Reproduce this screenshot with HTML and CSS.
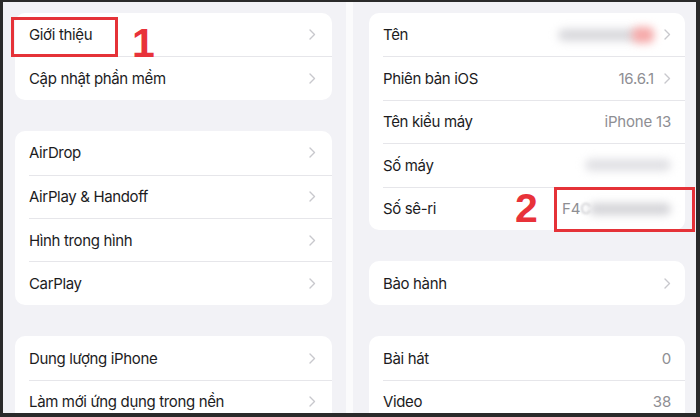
FILE: index.html
```html
<!DOCTYPE html>
<html lang="vi">
<head>
<meta charset="utf-8">
<title>Cài đặt chung</title>
<link rel="stylesheet" href="styles.css">
</head>
<body>
<div class="frame">
  <section class="panel panel-left">
    <div class="card">
      <div class="row"><span class="label">Giới thiệu</span><svg class="chev" viewBox="0 0 7 11"><path d="M1 1l4.5 4.5L1 10"/></svg></div>
      <div class="row"><span class="label">Cập nhật phần mềm</span><svg class="chev" viewBox="0 0 7 11"><path d="M1 1l4.5 4.5L1 10"/></svg></div>
    </div>
    <div class="card">
      <div class="row"><span class="label">AirDrop</span><svg class="chev" viewBox="0 0 7 11"><path d="M1 1l4.5 4.5L1 10"/></svg></div>
      <div class="row"><span class="label">AirPlay &amp; Handoff</span><svg class="chev" viewBox="0 0 7 11"><path d="M1 1l4.5 4.5L1 10"/></svg></div>
      <div class="row"><span class="label">Hình trong hình</span><svg class="chev" viewBox="0 0 7 11"><path d="M1 1l4.5 4.5L1 10"/></svg></div>
      <div class="row"><span class="label">CarPlay</span><svg class="chev" viewBox="0 0 7 11"><path d="M1 1l4.5 4.5L1 10"/></svg></div>
    </div>
    <div class="card">
      <div class="row"><span class="label">Dung lượng iPhone</span><svg class="chev" viewBox="0 0 7 11"><path d="M1 1l4.5 4.5L1 10"/></svg></div>
      <div class="row"><span class="label">Làm mới ứng dụng trong nền</span><svg class="chev" viewBox="0 0 7 11"><path d="M1 1l4.5 4.5L1 10"/></svg></div>
    </div>
  </section>
  <div class="strip"></div>
  <section class="panel panel-right">
    <div class="card">
      <div class="row"><span class="label">Tên</span><span class="value"><span class="blur blur-name"></span><span class="blur blur-red"></span></span><svg class="chev" viewBox="0 0 7 11"><path d="M1 1l4.5 4.5L1 10"/></svg></div>
      <div class="row"><span class="label">Phiên bản iOS</span><span class="value">16.6.1</span><svg class="chev" viewBox="0 0 7 11"><path d="M1 1l4.5 4.5L1 10"/></svg></div>
      <div class="row"><span class="label">Tên kiểu máy</span><span class="value">iPhone 13</span></div>
      <div class="row"><span class="label">Số máy</span><span class="value"><span class="blur blur-model"></span></span></div>
      <div class="row"><span class="label">Số sê-ri</span><span class="value">F4<span class="fade">C</span><span class="blur blur-serial"></span></span></div>
    </div>
    <div class="card">
      <div class="row"><span class="label">Bảo hành</span><svg class="chev" viewBox="0 0 7 11"><path d="M1 1l4.5 4.5L1 10"/></svg></div>
    </div>
    <div class="card">
      <div class="row"><span class="label">Bài hát</span><span class="value">0</span></div>
      <div class="row"><span class="label">Video</span><span class="value">38</span></div>
    </div>
  </section>

  <div class="mark mark-1"></div>
  <div class="num num-1">1</div>
  <div class="mark mark-2"></div>
  <div class="num num-2">2</div>
</div>
</body>
</html>
```
FILE: styles.css
```css
* { box-sizing: border-box; }
html, body { margin: 0; padding: 0; }
body {
  width: 700px;
  height: 417px;
  overflow: hidden;
  background: #2b2b2b;
  font-family: Inter, "Noto Sans", sans-serif;
}
.frame {
  position: relative;
  width: 700px;
  height: 417px;
  border-style: solid;
  border-color: #2a2a2a;
  border-width: 2px 4px 4px 3px;
  display: grid;
  grid-template-columns: 343px 7px 1fr;
  background: #f2f2f6;
  overflow: hidden;
}
.panel {
  display: flex;
  flex-direction: column;
  gap: 31.5px;
  padding-top: 11px;
}
.panel-left { padding-left: 12px; padding-right: 14px; }
.panel-right { padding-left: 16px; padding-right: 11px; }
.strip { background: #fbfbfc; }
.card {
  background: #ffffff;
  border-radius: 10px;
  overflow: hidden;
}
.row {
  height: 43.4px;
  display: flex;
  align-items: center;
  gap: 10px;
  margin-left: 14px;
  padding-right: 16px;
  border-top: 1px solid #e6e6ea;
}
.panel-right .row { padding-right: 14px; }
.row:first-child { border-top: none; }
.label {
  flex: 1;
  font-size: 15px;
  color: #1c1c1e;
  letter-spacing: -0.35px;
}
.value {
  font-size: 15px;
  color: #8e8e93;
  letter-spacing: -0.2px;
  display: flex;
  align-items: center;
  position: relative;
}
.chev {
  width: 7px;
  height: 11px;
  flex: none;
}
.chev path {
  fill: none;
  stroke: #c8c8cd;
  stroke-width: 1.4;
  stroke-linecap: round;
  stroke-linejoin: round;
}
.blur {
  display: inline-block;
  height: 12px;
  border-radius: 6px;
  filter: blur(4px);
}
.blur-name { width: 80px; background: #d8d8dc; }
.blur-red { width: 22px; height: 16px; background: #f5a8a8; margin-left: -6px; }
.blur-model { width: 86px; background: #e0e0e4; }
.fade { color: #c8c8cc; filter: blur(1px); }
.blur-serial { width: 82px; background: #d4d4d8; margin-left: -2px; }

.mark {
  position: absolute;
  border: 3px solid #e53238;
}
.mark-1 { left: 8px; top: 15px; width: 107px; height: 40px; }
.mark-2 { left: 551px; top: 185px; width: 141px; height: 45px; }
.num {
  position: absolute;
  font-family: "Liberation Sans", Arial, sans-serif;
  font-weight: 700;
  font-size: 41px;
  line-height: 1;
  color: #e8323a;
}
.num-1 { left: 129px; top: 21px; }
.num-2 { left: 512px; top: 186px; }
```
